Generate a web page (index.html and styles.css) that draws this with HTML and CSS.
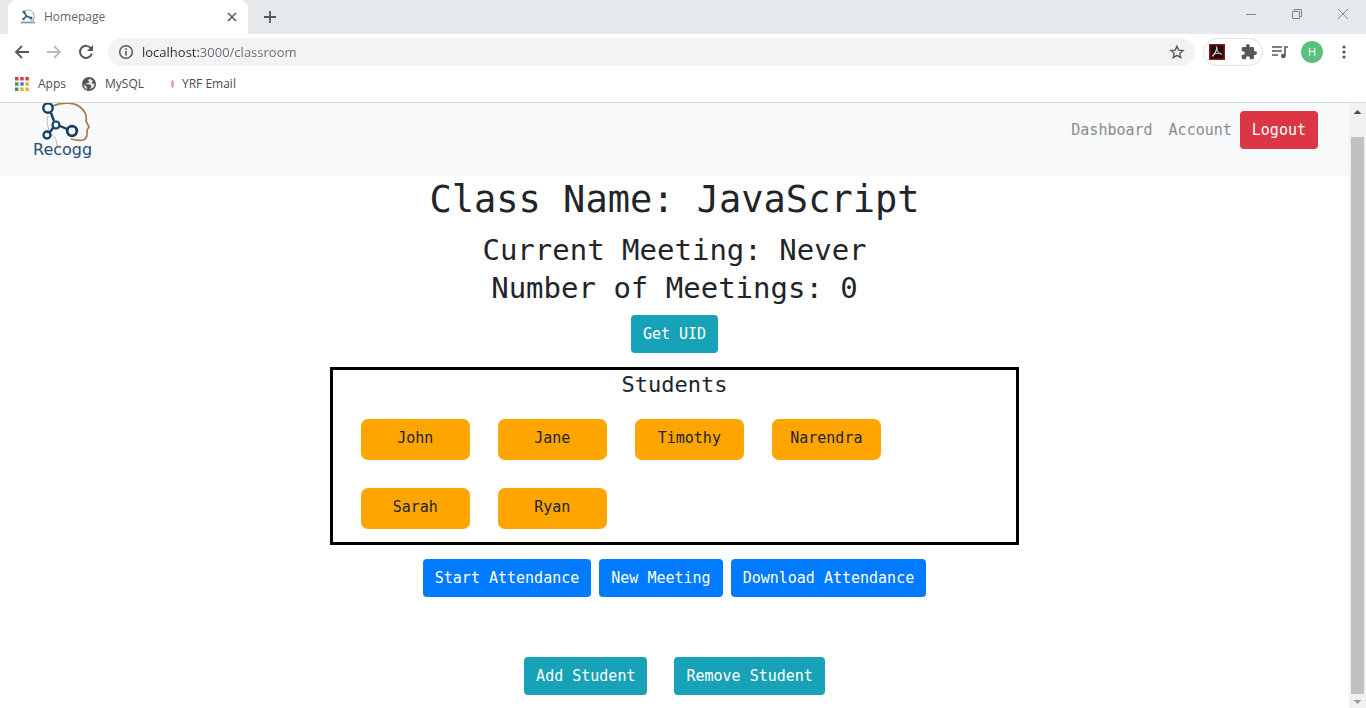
FILE: index.html
```html
<!DOCTYPE html>
<html lang="en">
<head>
<meta charset="utf-8">
<title>Homepage</title>
<link rel="stylesheet" href="styles.css">
</head>
<body>
<div class="browser">
  <header class="chrome">
    <div class="tab-strip">
      <div class="tab">
        <svg class="tab-logo" width="16" height="16" viewBox="0 0 16 16" fill="none">
          <path d="M5 2C8 0 13 1 13.500 5L14.500 8 13.500 9V11.500H10.500" stroke="#a9a39f"/>
          <path d="M4 3 6.500 7 11 9M6.500 7 3.500 10" stroke="#345d85" stroke-width="1.600"/>
          <circle cx="4" cy="3" r="1.500" fill="#345d85"/><circle cx="11" cy="9" r="1.500" fill="#345d85"/><circle cx="3.500" cy="10" r="1.200" fill="#345d85"/>
          <path d="M1 13.500H15" stroke="#8498b3" stroke-width="1.800"/>
        </svg>
        <span class="tab-title">Homepage</span>
        <button class="icon-button" aria-label="Close tab"><svg width="10" height="10" viewBox="0 0 10 10"><path d="M1 1 9 9M9 1 1 9" stroke="#5a5d61" stroke-width="1.600"/></svg></button>
      </div>
      <button class="icon-button new-tab" aria-label="New tab"><svg width="14" height="14" viewBox="0 0 14 14"><path d="M7 1V13M1 7H13" stroke="#55585c" stroke-width="1.800"/></svg></button>
      <div class="window-controls">
        <button class="icon-button" aria-label="Minimize"><svg width="12" height="12" viewBox="0 0 12 12"><path d="M1 6.500H11" stroke="#85888b"/></svg></button>
        <button class="icon-button" aria-label="Restore"><svg width="12" height="12" viewBox="0 0 12 12" fill="none" stroke="#85888b"><path d="M1.500 3.500H8.500V10.500H1.500ZM3.500 3.500V1.500H10.500V8.500H8.500"/></svg></button>
        <button class="icon-button" aria-label="Close"><svg width="12" height="12" viewBox="0 0 12 12"><path d="M1 1 11 11M11 1 1 11" stroke="#85888b"/></svg></button>
      </div>
    </div>
    <div class="toolbar">
      <div class="history">
        <button class="icon-button" aria-label="Back"><svg width="16" height="16" viewBox="0 0 16 16" fill="none" stroke="#55585c" stroke-width="1.800"><path d="M15 8H2M8 2 2 8 8 14"/></svg></button>
        <button class="icon-button" aria-label="Forward"><svg width="16" height="16" viewBox="0 0 16 16" fill="none" stroke="#b9bbbe" stroke-width="1.800"><path d="M1 8H14M8 2 14 8 8 14"/></svg></button>
        <button class="icon-button" aria-label="Reload"><svg width="16" height="16" viewBox="0 0 16 16"><path d="M13 4.500A6 6 0 1 0 13.800 9.500" fill="none" stroke="#55585c" stroke-width="2"/><path d="M15 1V7H9Z" fill="#55585c"/></svg></button>
      </div>
      <div class="omnibox">
        <svg width="16" height="16" viewBox="0 0 16 16" fill="none" stroke="#55585c"><circle cx="8" cy="8" r="6.300" stroke-width="1.500"/><path d="M8 7V11.500M8 4.300V6" stroke-width="1.600"/></svg>
        <input class="address" aria-label="Address" value="localhost:3000/classroom">
        <button class="icon-button" aria-label="Bookmark this page"><svg width="16" height="16" viewBox="0 0 16 16" fill="none" stroke="#55585c" stroke-width="1.400"><path d="M8 2.200 9.700 6.100 14 6.500 10.800 9.300 11.700 13.500 8 11.300 4.300 13.500 5.200 9.300 2 6.500 6.300 6.100Z"/></svg></button>
      </div>
      <div class="extensions">
        <button class="icon-button" aria-label="Acrobat"><svg width="16" height="16" viewBox="0 0 16 16"><path d="M.75.75H15.250V15.250H.75Z" fill="#210707" stroke="#8d1719" stroke-width="1.500"/><path d="M7 3C8.500 3 8 7 3.500 12.500" fill="none" stroke="#d8cfcf" stroke-width="1.400"/><path d="M7.500 4C8 7 9.500 9 12.800 10.500M4.500 10.500C7 9.200 9.500 8.800 12.500 9.800" fill="none" stroke="#d8cfcf"/></svg></button>
        <button class="icon-button" aria-label="Extensions"><svg width="16" height="16" viewBox="1 1 22 22" fill="#55585c"><path d="M20.500 11H19V7a2 2 0 0 0-2-2h-4V3.500a2.500 2.500 0 0 0-5 0V5H4a2 2 0 0 0-2 2v3.800h1.500a2.700 2.700 0 0 1 0 5.400H2V20a2 2 0 0 0 2 2h3.800v-1.500a2.700 2.700 0 0 1 5.400 0V22H17a2 2 0 0 0 2-2v-4h1.500a2.500 2.500 0 0 0 0-5Z"/></svg></button>
      </div>
      <button class="icon-button" aria-label="Media controls"><svg width="18" height="16" viewBox="0 0 18 16"><path d="M1 3H11M1 7H11M1 11H7M14 12V3H17" fill="none" stroke="#55585c" stroke-width="1.600"/><circle cx="12.300" cy="12" r="2.300" fill="#55585c"/></svg></button>
      <button class="avatar" aria-label="Profile H">H</button>
      <button class="icon-button" aria-label="Menu"><svg width="16" height="16" viewBox="0 0 16 16" fill="#55585c"><circle cx="8" cy="3" r="1.600"/><circle cx="8" cy="8" r="1.600"/><circle cx="8" cy="13" r="1.600"/></svg></button>
    </div>
    <nav class="bookmarks" aria-label="Bookmarks">
      <a class="bookmark" href="#"><svg width="14" height="14" viewBox="0 0 14 14"><path d="M0 0h3.500v3.500H0zM5.200 0h3.500v3.500H5.200zM10.400 0h3.500v3.500h-3.500z" fill="#d1433c"/><path d="M0 5.200h3.500v3.500H0zM0 10.400h3.500v3.500H0z" fill="#3c9c56"/><path d="M5.200 5.200h3.500v3.500H5.200z" fill="#3f7ee0"/><path d="M10.400 5.200h3.500v3.500h-3.500zM5.200 10.400h3.500v3.500H5.200zM10.400 10.400h3.500v3.500h-3.500z" fill="#e7b12d"/></svg>Apps</a>
      <a class="bookmark" href="#"><svg width="14" height="14" viewBox="0 0 14 14"><circle cx="7" cy="7" r="7" fill="#505357"/><path d="M7.500 1.500 6 3.500 7.500 5 6 6.200H3.500L5 7.600 8 7.500 9.500 9.500 7.500 12.500 12 10 12.500 7 9.500 6 11 4ZM1.500 7 4.500 9.500 5.500 12.500 2.800 11Z" fill="#e6e7e8"/></svg>MySQL</a>
      <a class="bookmark bookmark-mail" href="#"><svg width="5" height="14" viewBox="0 0 5 14"><ellipse cx="2.500" cy="7" rx="1.500" ry="4" fill="#f0a29e"/></svg>YRF Email</a>
    </nav>
  </header>
  <div class="viewport">
    <div class="page">
      <nav class="navbar">
        <a class="brand" href="#" aria-label="Recogg">
          <svg width="64" height="58" viewBox="0 0 64 58" fill="none">
            <path d="M20 3C28-1 41-1 47 4 52 8 54 13 53 18L56 24 54 27V32C53 37 50 39 38 36" stroke="#a7794d" stroke-width="1.700"/>
            <path d="M15 13C13 19 15 26 18 31 22 34 24 37 24 43" stroke="#d3b79d"/>
            <path d="M18 10 21 18M27 23 34 26M20 25 17 29" stroke="#123f69" stroke-width="2.400"/>
            <circle cx="15" cy="5" r="4.700" stroke="#123f69" stroke-width="2.400"/>
            <circle cx="23" cy="22" r="3.500" stroke="#123f69" stroke-width="2.200"/>
            <circle cx="39" cy="28" r="4.800" stroke="#123f69" stroke-width="2.800"/>
            <circle cx="14" cy="32" r="3.500" stroke="#123f69" stroke-width="2.300"/>
            <text class="brand-name" x="0" y="52">Recogg</text>
          </svg>
        </a>
        <div class="nav-links">
          <a class="nav-link" href="#">Dashboard</a>
          <a class="nav-link" href="#">Account</a>
        </div>
        <button class="button button-danger">Logout</button>
      </nav>
      <main class="classroom">
        <h1 class="class-name">Class Name: JavaScript</h1>
        <h2 class="meeting-info">Current Meeting: Never</h2>
        <h2 class="meeting-info">Number of Meetings: 0</h2>
        <div class="uid-row"><button class="button button-info">Get UID</button></div>
        <section class="students">
          <h3 class="students-title">Students</h3>
          <ul class="student-list">
            <li class="student">John</li>
            <li class="student">Jane</li>
            <li class="student">Timothy</li>
            <li class="student">Narendra</li>
            <li class="student">Sarah</li>
            <li class="student">Ryan</li>
          </ul>
        </section>
        <div class="meeting-actions">
          <button class="button button-primary">Start Attendance</button>
          <button class="button button-primary">New Meeting</button>
          <button class="button button-primary">Download Attendance</button>
        </div>
        <div class="student-actions">
          <button class="button button-info">Add Student</button>
          <button class="button button-info">Remove Student</button>
        </div>
      </main>
    </div>
    <div class="scrollbar">
      <svg width="17" height="17" viewBox="0 0 17 17"><path d="M4.500 11 8.500 7 12.500 11Z" fill="#505050"/></svg>
      <div class="scroll-track"><div class="scroll-thumb"></div></div>
      <svg width="17" height="14" viewBox="0 0 17 14"><path d="M4.500 6 8.500 10 12.500 6Z" fill="#9a9a9a"/></svg>
    </div>
  </div>
</div>
</body>
</html>
```
FILE: styles.css
```css
* { box-sizing: border-box; }
body { margin: 0; background: #fff; }
svg { display: block; flex: none; }
a { text-decoration: none; color: inherit; }
button { font: inherit; border: 0; cursor: pointer; }

.browser { display: flex; flex-direction: column; height: 100vh; overflow: hidden; }

.chrome { flex: none; border-bottom: 1px solid #d5d8db; font: 12px/16px "Open Sans", sans-serif; color: #4a4d51; }
.icon-button { display: grid; place-items: center; padding: 0; background: none; }

.tab-strip { display: flex; height: 34px; padding-left: 8px; background: #e6e9ec; }
.tab { display: flex; align-items: center; width: 240px; padding: 0 11px 0 12px; border-radius: 8px 8px 0 0; background: #fff; }
.tab-title { flex: 1; margin-left: 8px; color: #5f6367; }
.new-tab { margin-left: 15px; }
.window-controls { display: flex; gap: 34px; margin-left: auto; padding: 0 17px 6px 0; }

.toolbar { display: flex; align-items: center; height: 36px; padding-right: 14px; }
.history { display: flex; gap: 16px; padding: 0 14px; }
.omnibox { display: flex; flex: 1; align-items: center; height: 28px; padding: 0 10px; border-radius: 14px; background: #f1f3f4; }
.address {
  flex: 1; min-width: 0; margin-left: 8px; padding: 0; border: 0; outline: 0;
  font: 13px/20px "Open Sans", sans-serif;
  color: transparent;
  background: linear-gradient(90deg, #27292c 58px, #65696d 58px);
  -webkit-background-clip: text; background-clip: text;
}
.extensions { display: flex; align-items: center; justify-content: space-between; width: 60px; height: 28px; margin: 0 8px; padding: 0 5px; border: 1px solid #dfe1e4; border-radius: 14px; }
.avatar { width: 22px; height: 22px; margin: 0 13px 0 12px; padding: 0; border-radius: 50%; background: #5bbf7d; color: #fff; font-size: 11px; }

.bookmarks { display: flex; align-items: center; gap: 16px; height: 32px; padding: 0 15px 4px; }
.bookmark { display: flex; align-items: center; gap: 9px; }
.bookmark-mail { gap: 7px; margin-left: 10px; }

.viewport { display: flex; flex: 1; min-height: 0; }
.page { flex: 1; min-width: 0; overflow: hidden; font: 15px/24px "DejaVu Sans Mono", monospace; color: #212529; }

.navbar { display: flex; align-items: center; height: 72px; padding: 0 31px 18px 33px; background: #f8f9fa; }
.brand { align-self: flex-start; margin-right: auto; }
.brand-name { font: 16px "DejaVu Sans", sans-serif; fill: #284d76; }
.nav-links { display: flex; gap: 16px; margin-right: 8px; color: #8a8b8c; }

.button { height: 38px; padding: 0 12px; border-radius: 4px; color: #fff; }
.button-danger { background: #dc3545; }
.button-info { background: #17a2b8; }
.button-primary { background: #007bff; }

.classroom { text-align: center; }
.class-name { margin: 0 0 6px; font-size: 37px; line-height: 50px; font-weight: 400; }
.meeting-info { margin: 0; font-size: 29px; line-height: 38px; font-weight: 400; }
.uid-row { display: flex; justify-content: center; margin: 8px 0 14px; }

.students { width: 51.1%; margin: 0 auto 14px; border: 3px solid #000; }
.students-title { margin: 0; font-size: 22px; line-height: 29px; font-weight: 400; }
.student-list { display: grid; grid-template-columns: repeat(auto-fill, 109px); gap: 28px; margin: 0; padding: 20px 28px 13px; list-style: none; }
.student { padding: 7px 0 10px; border-radius: 7px; background: #ffa500; }

.meeting-actions { display: flex; justify-content: center; gap: 8px; }
.student-actions { display: flex; justify-content: center; gap: 27px; margin-top: 60px; }

.scrollbar { display: flex; flex-direction: column; flex: none; width: 17px; background: #f1f1f1; }
.scroll-track { flex: 1; padding: 17px 2px 0; }
.scroll-thumb { height: 100%; background: #c1c1c1; }
```
